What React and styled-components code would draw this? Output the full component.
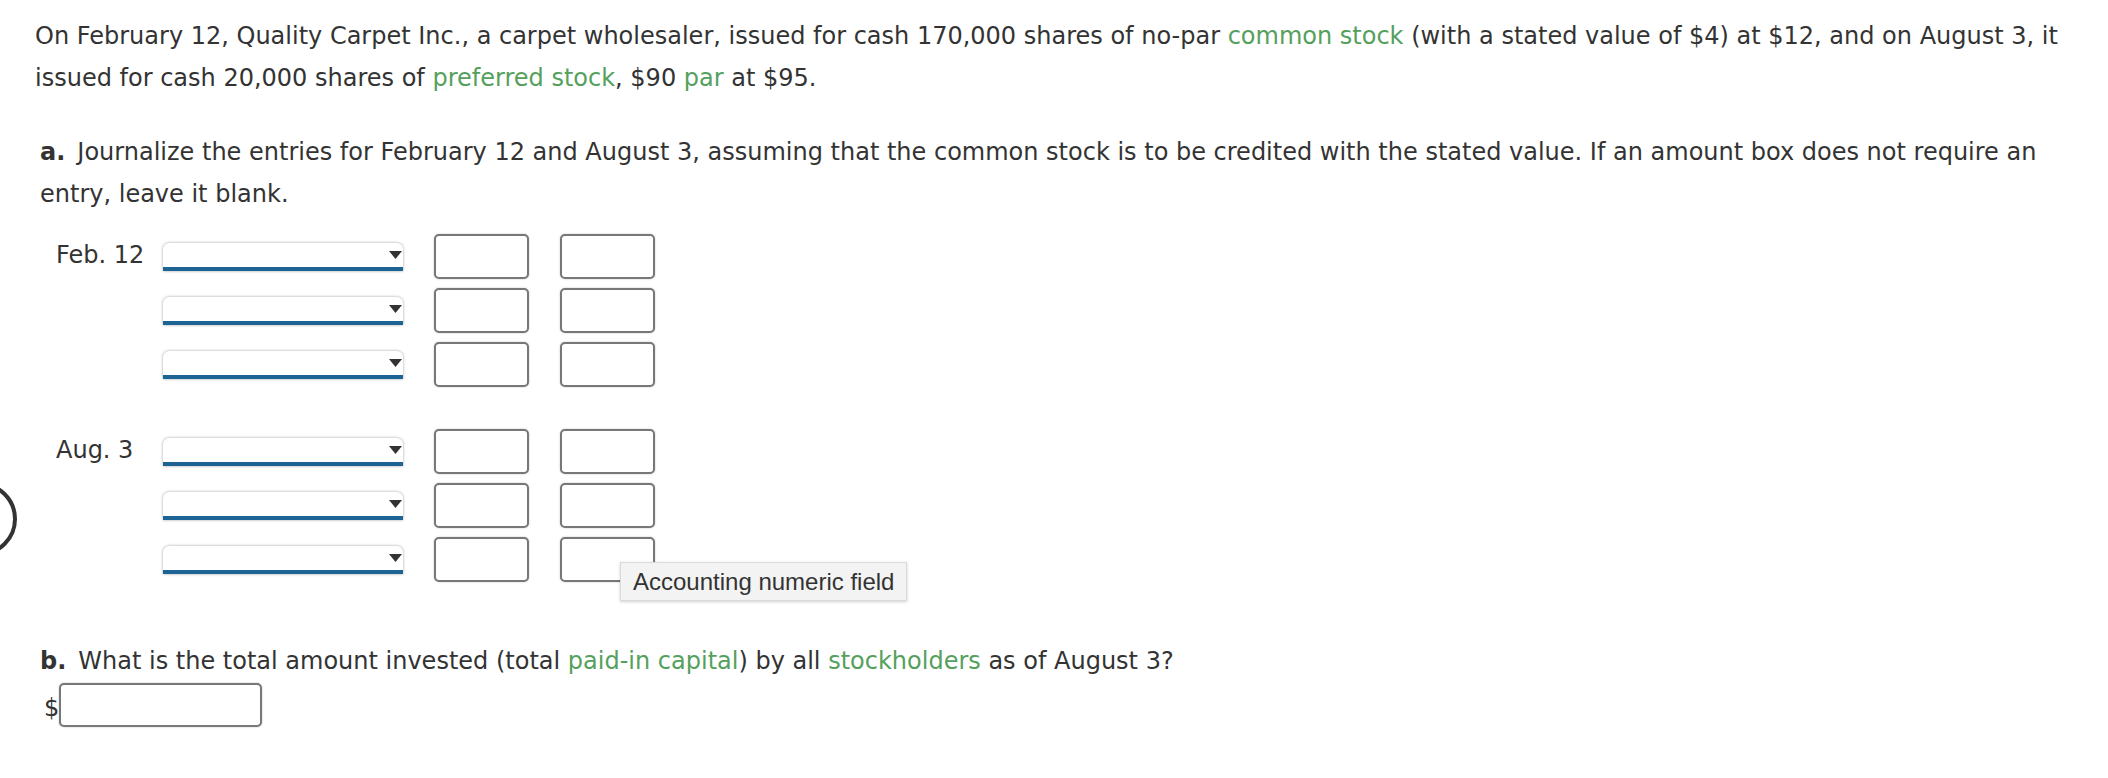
import styled, { createGlobalStyle } from "styled-components";

const GlobalStyle = createGlobalStyle`
	body {
		margin: 0;
		background: #fff;
		color: #333;
		font-family: "DejaVu Sans", Verdana, sans-serif;
	}
	* {
		box-sizing: border-box;
	}
`;

const Page = styled.main`
	position: relative;
	width: 2108px;
	min-height: 778px;
	padding: 15px 20px 0 35px;
	overflow: hidden;
	font-size: 24px;
	line-height: 42px;
`;

const Intro = styled.p`
	margin: 0;
`;

const Term = styled.span`
	color: #55a05d;
`;

const Question = styled.p`
	margin: ${(props) => props.$top}px 0 0 0;
	padding-left: 5px;

	b {
		font-weight: 700;
		margin-right: 12px;
	}
`;

const Journal = styled.div`
	margin-top: 19px;
	padding-left: 21px;
	display: flex;
	flex-direction: column;
	gap: 42px;
`;

const EntryGroup = styled.div`
	display: grid;
	grid-template-columns: 76px 240px 95px 95px;
	grid-auto-rows: 45px;
	column-gap: 31px;
	row-gap: 9px;
	align-items: center;
`;

const DateLabel = styled.div`
	white-space: nowrap;
	line-height: 1;
	margin-top: -4px;
`;

const SelectWrap = styled.div`
	position: relative;
	width: 240px;
	height: 28px;
	border-radius: 6px 6px 0 0;
	background: #fff;
	border-bottom: 4px solid #1d6394;
	box-shadow: 0 0 3px rgba(0, 0, 0, 0.38);

	select {
		appearance: none;
		width: 100%;
		height: 100%;
		border: none;
		background: transparent;
		outline: none;
		font: inherit;
	}

	svg {
		position: absolute;
		right: 1px;
		top: 8px;
		pointer-events: none;
	}
`;

const Cell = styled.div`
	position: relative;
	height: 45px;
`;

const AmountBox = styled.input`
	width: ${(props) => props.$width || 95}px;
	height: 100%;
	border: 2px solid #777;
	border-radius: 5px;
	background: #fff;
	box-shadow: 0 0 2px rgba(0, 0, 0, 0.25);
	outline: none;
	font: inherit;
`;

const Tooltip = styled.div`
	position: absolute;
	left: 60px;
	top: 25px;
	z-index: 2;
	white-space: nowrap;
	height: 39px;
	padding: 0 12px;
	background: #f3f3f3;
	border: 1px solid #dadada;
	box-shadow: 0 1px 3px rgba(0, 0, 0, 0.18);
	font-family: "Liberation Sans", Arial, sans-serif;
	font-size: 24px;
	line-height: 37px;
	color: #333;
`;

const AnswerRow = styled.div`
	display: flex;
	align-items: center;
	padding-left: 9px;
	margin-top: 1px;
	height: 44px;

	span {
		line-height: 1;
		margin-top: 6px;
	}
`;

const EdgeRing = styled.div`
	position: absolute;
	left: -57px;
	top: 482px;
	width: 74px;
	height: 74px;
	border: 4px solid #333;
	border-radius: 50%;
`;

const Dropdown = () => (
	<SelectWrap>
		<select defaultValue="">
			<option value=""></option>
		</select>
		<svg width="13" height="8" viewBox="0 0 13 8">
			<path d="M0 0 H13 L6.5 8 Z" fill="#333" />
		</svg>
	</SelectWrap>
);

const EntryRow = ({ label, tip }) => (
	<>
		<DateLabel>{label}</DateLabel>
		<Dropdown />
		<Cell>
			<AmountBox type="text" />
		</Cell>
		<Cell>
			<AmountBox type="text" />
			{tip && <Tooltip>Accounting numeric field</Tooltip>}
		</Cell>
	</>
);

const entries = [
	{ date: "Feb. 12", rows: 3 },
	{ date: "Aug. 3", rows: 3 },
];

export default function App() {
	return (
		<>
			<GlobalStyle />
			<Page>
				<EdgeRing />
				<Intro>
					On February 12, Quality Carpet Inc., a carpet wholesaler, issued for
					cash 170,000 shares of no-par <Term>common stock</Term> (with a
					stated value of $4) at $12, and on August 3, it issued for cash
					20,000 shares of <Term>preferred stock</Term>, $90 <Term>par</Term>{" "}
					at $95.
				</Intro>
				<Question $top={32}>
					<b>a.</b>Journalize the entries for February 12 and August 3,
					assuming that the common stock is to be credited with the stated
					value. If an amount box does not require an entry, leave it blank.
				</Question>
				<Journal>
					{entries.map((group, gi) => (
						<EntryGroup key={group.date}>
							{Array.from({ length: group.rows }).map((_, ri) => (
								<EntryRow
									key={ri}
									label={ri === 0 ? group.date : ""}
									tip={gi === entries.length - 1 && ri === group.rows - 1}
								/>
							))}
						</EntryGroup>
					))}
				</Journal>
				<Question $top={58}>
					<b>b.</b>What is the total amount invested (total{" "}
					<Term>paid-in capital</Term>) by all <Term>stockholders</Term> as of
					August 3?
				</Question>
				<AnswerRow>
					<span>$</span>
					<AmountBox type="text" $width={203} />
				</AnswerRow>
			</Page>
		</>
	);
}
